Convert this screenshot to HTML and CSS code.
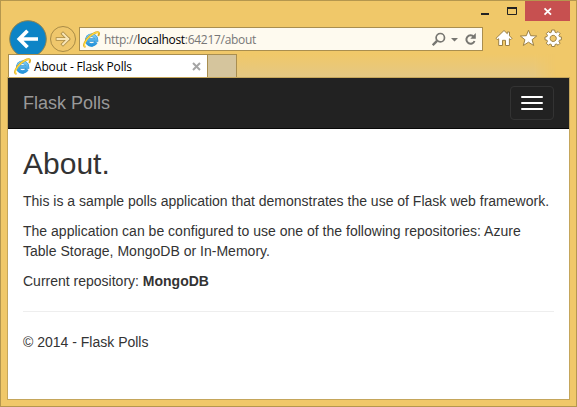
FILE: index.html
```html
<!DOCTYPE html>
<html lang="en">
<head>
<meta charset="utf-8">
<title>About - Flask Polls</title>
<link rel="stylesheet" href="styles.css">
</head>
<body>
<svg class="defs" width="0" height="0" aria-hidden="true">
  <defs>
    <linearGradient id="blue" x1="0" y1="0" x2="0" y2="1"><stop offset="0" stop-color="#7cc9f0"/><stop offset="1" stop-color="#2695dc"/></linearGradient>
  </defs>
  <symbol id="ie" viewBox="0 0 17 17">
    <path d="M13 11.3A4.9 4.9 0 1 1 13.5 9H4.7" fill="none" stroke="#2d91d2" stroke-width="3.5"/>
    <path d="M13 11.3A4.9 4.9 0 1 1 13.5 9H4.7" fill="none" stroke="url(#blue)" stroke-width="2.7"/>
    <path d="M2.5 15.8C-1 15.500 2.200 9 7 5C11 1.600 15.500 0 16 2.200C16.200 3 15.700 4.100 15.200 5" fill="none" stroke="#dca91c" stroke-width="1.900"/>
    <path d="M2.500 15.600C-.5 15.200 2.600 9 7.200 5.100C11 1.900 15.200 .4 15.800 2.300" fill="none" stroke="#ffdc45" stroke-width="1.100"/>
  </symbol>
</svg>
<div class="window">
  <div class="titlebar">
    <svg class="caption" width="43" height="20" viewBox="0 0 43 20"><path d="M0 12h8v2H0z" fill="#222"/><path d="M26.500 7.500h9v6h-9z" fill="none" stroke="#222"/><path d="M26 7h10" stroke="#222" stroke-width="2"/></svg>
    <div class="close"><svg width="45" height="20" viewBox="0 0 45 20"><path d="M19.500 7.300l6.500 6.400M26 7.300l-6.500 6.400" stroke="#fff" stroke-width="1.800"/></svg></div>
  </div>
  <div class="toolbar">
    <svg class="nav" width="71" height="38" viewBox="0 0 71 38">
      <circle cx="20" cy="19" r="18.300" fill="#0d84c6" stroke="#8f8350"/>
      <path d="M30 19H12M19.500 10.800L11.300 19L19.500 27.200" fill="none" stroke="#fff" stroke-width="3.700"/>
      <circle cx="55" cy="19" r="12.500" fill="#efc76c" stroke="#a98b46"/>
      <path d="M49.500 19H60M55 13.700L60.300 19L55 24.300" fill="none" stroke="#a98b46" stroke-width="3.600" stroke-linecap="square"/>
      <path d="M49.500 19H60M55 13.700L60.300 19L55 24.300" fill="none" stroke="#f8e5b6" stroke-width="2" stroke-linecap="square"/>
    </svg>
    <div class="address">
      <svg width="17" height="17"><use href="#ie"/></svg>
      <span class="url">http://<b>localhost</b>:64217/about</span>
      <svg class="tools" width="46" height="16" viewBox="0 0 46 16">
        <g fill="none" stroke="#777671"><circle cx="8.300" cy="6.700" r="4.200" stroke-width="1.700"/><path d="M5 9.900L.7 14.200" stroke-width="2.500"/><path d="M41.800 5.800A4.200 4.200 0 1 0 42.500 10" stroke-width="2"/></g>
        <path d="M19 7h7L22.500 10.500zM43.800 2v5.800h-5.500z" fill="#777671"/>
      </svg>
    </div>
    <svg class="commands" width="68" height="18" viewBox="0 0 68 18">
      <g fill="#fff" stroke="#9c8145" stroke-width="1" stroke-linejoin="round">
        <path d="M9 1.500L1 9.300L2.200 10.700L3.700 9.700V16.500H7.500V11.300H10.500V16.500H14.400V9.700L15.700 10.700L17 9.300L14.500 6.800V3H12.300V4.700z"/>
        <path d="M33.500 1.200L35.700 6.700L41.700 7L37.100 10.700L38.700 16.500L33.500 13.200L28.300 16.500L29.900 10.700L25.300 7L31.300 6.700z"/>
        <path fill-rule="evenodd" d="M56.700 1h3l.4 2.300 1.200.5 1.800-1.200 2 2-1.200 1.800.5 1.200 2 .4v2.800l-2 .4-.5 1.200 1.200 1.800-2 2-1.800-1.200-1.200.5-.4 2h-3l-.4-2-1.200-.5-1.800 1.200-2-2 1.200-1.800-.5-1.200-2-.4V8l2-.4.5-1.200-1.200-1.800 2-2L55.100 3.800l1.200-.5zM58.200 6.300a3.100 3.100 0 1 0 .01 0z"/>
      </g>
    </svg>
  </div>
  <div class="tabs">
    <div class="tab"><svg width="17" height="17"><use href="#ie"/></svg><span>About - Flask Polls</span><svg class="tabclose" width="9" height="9" viewBox="0 0 9 9"><path d="M1 1l7 7M8 1L1 8" stroke="#a5a5a5" stroke-width="2"/></svg></div>
    <div class="newtab"></div>
    <div class="tabrest"></div>
  </div>
  <div class="page">
    <nav class="navbar"><span class="brand">Flask Polls</span><button class="toggle" aria-label="Menu"><i></i><i></i><i></i></button></nav>
    <main class="content">
      <h2>About.</h2>
      <p>This is a sample polls application that demonstrates the use of Flask web framework.</p>
      <p class="config">The application can be configured to use one of the following repositories: Azure Table Storage, MongoDB or In-Memory.</p>
      <p>Current repository: <strong>MongoDB</strong></p>
      <hr>
      <footer>© 2014 - Flask Polls</footer>
    </main>
  </div>
</div>
</body>
</html>
```
FILE: styles.css
```css
* { box-sizing: border-box; }
body { margin: 0; overflow: hidden; }
svg { display: block; flex: none; }
.defs { position: absolute; }
.window {
  display: flex;
  flex-direction: column;
  width: 577px;
  height: 407px;
  padding: 0 6px 6px;
  border: 1px solid #b5974e;
  background: #f0c869;
  font: 12px "Open Sans", "Noto Sans", sans-serif;
}
.titlebar { display: flex; justify-content: flex-end; height: 20px; }
.caption { margin-right: 1px; }
.close { width: 45px; height: 20px; background: #c75050; }
.toolbar { display: flex; align-items: flex-start; height: 33px; padding-left: 1px; }
.nav { margin-top: -1px; }
.address {
  display: flex;
  align-items: center;
  width: 404px;
  height: 24px;
  margin-top: 6px;
  padding: 0 4px 0 3px;
  border: 1px solid #a98e4f;
  background: #fefaef;
}
.url { flex: 1; margin-left: 4px; padding-top: 1px; color: #777; letter-spacing: -0.29px; white-space: nowrap; }
.url b { color: #000; font-weight: 400; }
.commands { margin: 8px 0 0 12px; }
.tabs { position: relative; display: flex; height: 23px; padding-left: 1px; }
.tab {
  display: flex;
  align-items: center;
  width: 200px;
  padding: 0 6px 0 5px;
  border: 1px solid #a98e4f;
  border-bottom: 0;
  background: #fff;
  color: #000;
}
.tab span { margin-left: 3px; padding-top: 1px; letter-spacing: -0.17px; white-space: nowrap; }
.tabclose { margin-left: auto; }
.newtab { width: 29px; border: 1px solid #a98e4f; border-left: 0; border-bottom: 0; background: #d5c59d; }
.tabrest { flex: 1; margin-right: 14px; background: linear-gradient(#f0c869, #e4c883); -webkit-mask-image: linear-gradient(90deg, #000 93%, transparent); mask-image: linear-gradient(90deg, #000 93%, transparent); }
.page {
  flex: 1;
  border: 1px solid #c5a65b;
  background: #fff;
  color: #333;
  font: 14px/20px "Liberation Sans", Arial, sans-serif;
}
.navbar {
  display: flex;
  align-items: center;
  justify-content: space-between;
  height: 51px;
  padding: 0 15px;
  border-bottom: 1px solid #080808;
  background: #222;
}
.brand { color: #999; font-size: 18px; }
.toggle {
  display: flex;
  flex-direction: column;
  gap: 4px;
  width: 44px;
  height: 34px;
  padding: 9px 10px;
  border: 1px solid #333;
  border-radius: 4px;
  background: transparent;
}
.toggle i { width: 22px; height: 2px; border-radius: 1px; background: #fff; }
.content { padding: 18px 15px 0; }
h2 { margin: 0 0 11px; font-size: 30px; font-weight: 400; line-height: 33px; }
p { margin: 0 0 10px; }
.config { letter-spacing: 0.015px; }
hr { margin: 20px 0; border: 0; border-top: 1px solid #eee; }
```
